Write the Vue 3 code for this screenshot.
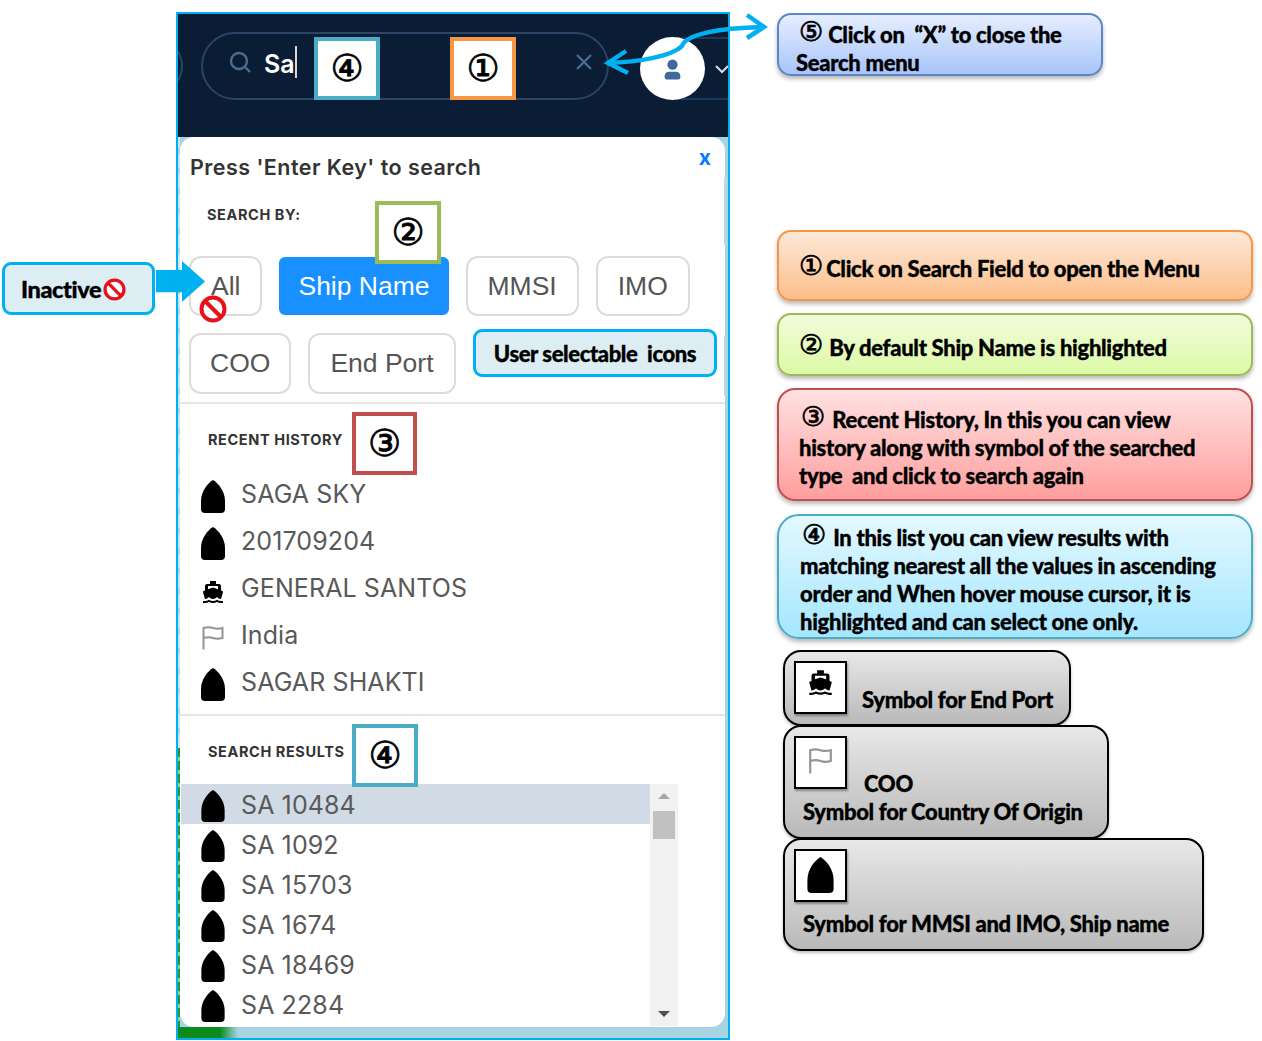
<script setup>
const chipsA = ['All', 'Ship Name', 'MMSI', 'IMO']
const chipsB = ['COO', 'End Port']

const history = [
  { icon: 'hull', label: 'SAGA SKY' },
  { icon: 'hull', label: '201709204' },
  { icon: 'ferry', label: 'GENERAL SANTOS' },
  { icon: 'flag', label: 'India' },
  { icon: 'hull', label: 'SAGAR SHAKTI' },
]

const results = ['SA 10484', 'SA 1092', 'SA 15703', 'SA 1674', 'SA 18469', 'SA 2284']
</script>

<template>
  <div class="page">
    <svg class="sprite" width="0" height="0">
      <defs>
        <symbol id="hull" viewBox="0 0 24 33">
          <path d="M12 0C17 3 24 11 24 21V29Q24 33 20 33H4Q0 33 0 29V21C0 11 7 3 12 0Z" fill="#000" />
        </symbol>
        <symbol id="ferry" viewBox="0 0 24 24">
          <path d="M20 21c-1.39 0-2.78-.47-4-1.32-2.44 1.71-5.56 1.71-8 0C6.78 20.53 5.39 21 4 21H2v2h2c1.38 0 2.74-.35 4-.99 2.52 1.29 5.48 1.29 8 0 1.26.65 2.62.99 4 .99h2v-2h-2zM3.95 19H4c1.6 0 3.02-.88 4-2 .98 1.12 2.4 2 4 2s3.02-.88 4-2c.98 1.12 2.4 2 4 2h.05l1.89-6.68c.08-.26.06-.54-.06-.78s-.34-.42-.6-.5L20 10.62V6c0-1.1-.9-2-2-2h-3V1H9v3H6c-1.1 0-2 .9-2 2v4.62l-1.29.42c-.26.08-.48.26-.6.5s-.15.52-.06.78L3.95 19zM7 6h10v3.2L12 7.6 7 9.2V6z" fill="#000" />
        </symbol>
        <symbol id="flag" viewBox="0 0 22 24">
          <path d="M1.5 23.5V2C5 1 8 1 11 2S17 3 20.5 2V12C17 13 14 13 11 12S5 11 1.5 12" fill="none" stroke="#959595" stroke-width="2" />
        </symbol>
        <symbol id="nope" viewBox="0 0 28 28">
          <circle cx="14" cy="14" r="11.5" fill="#fff" stroke="#e8111a" stroke-width="4" />
          <path d="M6 6L22 22" stroke="#e8111a" stroke-width="4" />
        </symbol>
      </defs>
    </svg>

    <div class="inactive">
      <span>Inactive</span>
      <svg class="nope-small"><use href="#nope" /></svg>
    </div>
    <div class="inactive-arrow"></div>

    <div class="panel">
      <header class="topbar">
        <div class="stub"></div>
        <div class="search">
          <svg class="search-icon" viewBox="0 0 24 24" width="24" height="24">
            <circle cx="11" cy="11" r="8" fill="none" stroke="#4b6d91" stroke-width="2.4" />
            <path d="M17 17L22 22" stroke="#4b6d91" stroke-width="2.4" />
          </svg>
          <span class="typed">Sa</span>
          <span class="caret"></span>
          <svg class="clear" viewBox="0 0 18 18" width="18" height="18">
            <path d="M2 2L16 16M16 2L2 16" stroke="#4a6b90" stroke-width="2.4" />
          </svg>
        </div>
        <div class="user">
          <div class="avatar">
            <svg viewBox="0 0 24 28" width="19" height="23">
              <circle cx="12" cy="9" r="6.5" fill="#3f6b9c" />
              <path d="M2 24Q2 18 8 18H16Q22 18 22 24Q22 28 18 28H6Q2 28 2 24Z" fill="#3f6b9c" />
            </svg>
          </div>
          <svg class="chevron" viewBox="0 0 14 10" width="14" height="10">
            <path d="M1 2L7 8L13 2" fill="none" stroke="#d5dde6" stroke-width="2" />
          </svg>
        </div>
      </header>

      <div class="card">
        <span class="card-close">x</span>
        <h1 class="card-title">Press 'Enter Key' to search</h1>

        <h2 class="label by">SEARCH BY:</h2>
        <div class="chips">
          <button v-for="c in chipsA" :key="c" class="chip" :class="{ on: c === 'Ship Name' }">{{ c }}</button>
        </div>
        <div class="chips second">
          <button v-for="c in chipsB" :key="c" class="chip">{{ c }}</button>
        </div>
        <hr class="rule first" />

        <h2 class="label">RECENT HISTORY</h2>
        <ul class="recent">
          <li v-for="h in history" :key="h.label" class="row">
            <svg class="row-icon" :class="h.icon"><use :href="'#' + h.icon" /></svg>
            <span class="row-text">{{ h.label }}</span>
          </li>
        </ul>
        <hr class="rule" />

        <h2 class="label">SEARCH RESULTS</h2>
        <div class="listbox">
          <ul class="result-list">
            <li v-for="(r, i) in results" :key="r" class="result" :class="{ hover: i === 0 }">
              <svg class="row-icon hull"><use href="#hull" /></svg>
              <span class="row-text">{{ r }}</span>
            </li>
          </ul>
          <div class="bar">
            <i class="tri up"></i>
            <i class="thumb"></i>
            <i class="tri down"></i>
          </div>
        </div>
      </div>

      <i class="card-thumb one"></i>
      <i class="card-thumb two"></i>

      <div class="mark mark-4a"><span>④</span></div>
      <div class="mark mark-1"><span>①</span></div>
      <div class="mark mark-2"><span>②</span></div>
      <div class="mark mark-3"><span>③</span></div>
      <div class="mark mark-4b"><span>④</span></div>
      <svg class="nope-big"><use href="#nope" /></svg>
      <div class="selectable">User selectable&nbsp; icons</div>
    </div>

    <svg class="arrows" viewBox="0 0 1262 1041" width="1262" height="1041">
      <path d="M607 63C640 62 672 56 682 46C686 34 720 28 762 27" fill="none" stroke="#00b0f0" stroke-width="4.5" />
      <path d="M626 51L608 63L628 73M747 15L764 27L747 38" fill="none" stroke="#00b0f0" stroke-width="4.5" />
    </svg>

    <aside class="notes">
      <div class="note blue">
        <p><span class="num">⑤</span> Click on&nbsp; “X” to close the</p>
        <p class="back">Search menu</p>
      </div>
      <div class="note orange">
        <p><span class="num">①</span> Click on Search Field to open the Menu</p>
      </div>
      <div class="note green">
        <p><span class="num">②</span> By default Ship Name is highlighted</p>
      </div>
      <div class="note red">
        <p><span class="num">③</span> Recent History, In this you can view</p>
        <p>history along with symbol of the searched</p>
        <p>type&nbsp; and click to search again</p>
      </div>
      <div class="note cyan">
        <p><span class="num">④</span> In this list you can view results with</p>
        <p>matching nearest all the values in ascending</p>
        <p>order and When hover mouse cursor, it is</p>
        <p>highlighted and can select one only.</p>
      </div>

      <div class="legend port">
        <div class="sym"><svg class="sym-ferry"><use href="#ferry" /></svg></div>
        <p class="port-text">Symbol for End Port</p>
      </div>
      <div class="legend coo">
        <div class="legend-top">
          <div class="sym"><svg class="sym-flag"><use href="#flag" /></svg></div>
          <p class="coo-text">COO</p>
        </div>
        <p class="under">Symbol for Country Of Origin</p>
      </div>
      <div class="legend ship">
        <div class="sym"><svg class="sym-hull"><use href="#hull" /></svg></div>
        <p class="under">Symbol for MMSI and IMO, Ship name</p>
      </div>
    </aside>
  </div>
</template>

<style scoped>
.page {
  position: relative;
  display: flex;
  align-items: flex-start;
  width: 1262px;
  height: 1041px;
  overflow: hidden;
  background: #fff;
  font-family: Inter, "Open Sans", sans-serif;
}

.sprite {
  position: absolute;
}

.inactive {
  position: absolute;
  left: 2px;
  top: 262px;
  width: 153px;
  height: 53px;
  box-sizing: border-box;
  display: flex;
  align-items: center;
  padding: 1px 0 0 16px;
  border: 3px solid #00b0f0;
  border-radius: 9px;
  background: #dcedf4;
  font: 900 23.5px Lato, sans-serif;
  letter-spacing: -0.4px;
  -webkit-text-stroke: 0.35px #000;
  color: #000;
}

.nope-small {
  width: 23px;
  height: 23px;
  margin-left: 2px;
}

.inactive-arrow {
  position: absolute;
  z-index: 2;
  left: 156px;
  top: 261px;
  width: 49px;
  height: 41px;
  background: #00b0f0;
  clip-path: polygon(0 22%, 53% 22%, 53% 0, 100% 50%, 53% 100%, 53% 76%, 0 76%);
}

.panel {
  position: relative;
  flex: none;
  width: 554px;
  height: 1028px;
  margin: 12px 0 0 176px;
  box-sizing: border-box;
  border: 2px solid #00b0f0;
  background:
    linear-gradient(90deg, #0c8a1e 70%, #a8d3e3) left bottom / 60px 11px no-repeat,
    repeating-linear-gradient(#1f9a2c 0 9px, #8ed39a 9px 13px) left bottom / 2px 290px no-repeat,
    repeating-linear-gradient(#cfe3ec 0 14px, #a9d8e8 14px 20px) left top / 2px 100% no-repeat,
    #a8d3e3;
}

.topbar {
  display: flex;
  align-items: flex-start;
  height: 123px;
  overflow: hidden;
  background: #0a1d35;
  padding-top: 18px;
  box-sizing: border-box;
}

.stub {
  flex: none;
  width: 40px;
  height: 48px;
  margin: 10px 0 0 -35px;
  border: 2px solid #2a4565;
  border-radius: 50%;
  box-sizing: border-box;
}

.search {
  flex: none;
  display: flex;
  align-items: center;
  width: 408px;
  height: 68px;
  margin-left: 18px;
  padding: 0 14px 8px 25px;
  box-sizing: border-box;
  border: 2px solid #2a4565;
  border-radius: 34px;
}

.search-icon {
  flex: none;
}

.typed {
  margin: 3px 0 0 12px;
  font-size: 25px;
  font-weight: 600;
  color: #fff;
}

.caret {
  width: 2px;
  height: 32px;
  background: #d9d9d9;
}

.clear {
  margin-left: auto;
}

.user {
  flex: none;
  display: flex;
  align-items: center;
  width: 130px;
  height: 63px;
  margin: 5px 0 0 31px;
  border: 2px solid #17395f;
  border-radius: 32px;
  border-left: 0;
  box-sizing: border-box;
}

.avatar {
  display: flex;
  align-items: center;
  justify-content: center;
  flex: none;
  width: 65px;
  height: 63px;
  border-radius: 50%;
  background: #fff;
}

.chevron {
  margin-left: 10px;
}

.card {
  position: relative;
  width: 545px;
  height: 890px;
  margin-left: 2px;
  background: #fff;
  border-radius: 14px;
}

.card-close {
  position: absolute;
  right: 14px;
  top: 8px;
  font-size: 21px;
  font-weight: 700;
  color: #0a7bff;
}

.card-title {
  margin: 0;
  padding: 16px 0 0 10px;
  font-size: 21.5px;
  line-height: 28px;
  font-weight: 600;
  letter-spacing: 0.45px;
  color: #333;
}

.label {
  margin: 26px 0 0 28px;
  font-size: 14.5px;
  line-height: 20px;
  font-weight: 700;
  letter-spacing: 0.6px;
  color: #333;
}

.label.by {
  margin: 24px 0 0 27px;
}

.chips {
  display: flex;
  align-items: center;
  gap: 17px;
  margin: 31px 0 0 9px;
}

.chips.second {
  margin-top: 17px;
}

.chip {
  height: 60px;
  padding: 0 20px;
  border: 2px solid #dcdcdc;
  border-radius: 12px;
  background: #fff;
  font: 26.5px "Liberation Sans", sans-serif;
  color: #555;
}

.second .chip {
  height: 61px;
}

.second .chip:first-child {
  padding: 0 19px;
}

.chip.on {
  height: 58px;
  padding: 0 17px;
  border-color: #1890ff;
  border-radius: 6px;
  background: #1890ff;
  color: #fff;
}

.rule {
  height: 2px;
  margin: 6px 0 0;
  border: 0;
  background: #e6e6e6;
}

.rule.first {
  margin-top: 8px;
}

.recent,
.result-list {
  list-style: none;
  margin: 0;
  padding: 0;
}

.recent {
  margin-top: 23px;
}

.row {
  display: flex;
  align-items: center;
  height: 47px;
  padding-left: 21px;
}

.row-icon {
  flex: none;
  width: 24px;
  height: 33px;
}

.row-icon.ferry {
  width: 24px;
  height: 24px;
  margin-top: 2px;
}

.row-icon.flag {
  width: 22px;
  height: 24px;
  margin: 1px 1px 0;
}

.row-text {
  margin: 0 0 5px 16px;
  font-size: 25px;
  letter-spacing: 0.1px;
  color: #595959;
}

.listbox {
  display: flex;
  width: 497px;
  height: 242px;
  margin: 22px 0 0 1px;
  overflow: hidden;
}

.result-list {
  flex: 1;
}

.result {
  display: flex;
  align-items: center;
  height: 40px;
  padding: 4px 0 0 20px;
  box-sizing: border-box;
}

.result.hover {
  background: #d0dbe6;
}

.result .row-icon {
  height: 32px;
}

.result .row-text {
  margin-bottom: 2px;
}

.bar {
  position: relative;
  flex: none;
  width: 28px;
  background: #f1f1f1;
}

.tri {
  position: absolute;
  left: 8px;
  border: 6px solid transparent;
}

.tri.up {
  top: 3px;
  border-bottom-color: #a8a8a8;
}

.tri.down {
  bottom: 3px;
  border-top-color: #505050;
}

.thumb {
  position: absolute;
  left: 3px;
  top: 27px;
  width: 22px;
  height: 28px;
  background: #c1c1c1;
}

.card-thumb {
  position: absolute;
  left: 546px;
  width: 3px;
  background: #bfd6e4;
}

.card-thumb.one {
  top: 163px;
  height: 68px;
}

.card-thumb.two {
  top: 322px;
  height: 60px;
}

.mark {
  position: absolute;
  display: flex;
  align-items: center;
  justify-content: center;
  width: 66px;
  height: 63px;
  box-sizing: border-box;
  border: 4px solid;
  background: #fff;
  font: 400 37px/1 "DejaVu Sans", sans-serif;
  -webkit-text-stroke: 0.8px #000;
  color: #000;
}

.mark-4a {
  left: 136px;
  top: 23px;
  border-color: #4bacc6;
}

.mark-1 {
  left: 272px;
  top: 23px;
  border-color: #f79646;
}

.mark-2 {
  left: 197px;
  top: 187px;
  border-color: #9bbb59;
}

.mark-3 {
  left: 174px;
  top: 398px;
  width: 65px;
  border-color: #c0504d;
}

.mark-4b {
  left: 174px;
  top: 710px;
  border-color: #4bacc6;
}

.nope-big {
  position: absolute;
  left: 21px;
  top: 281px;
  width: 28px;
  height: 28px;
}

.selectable {
  position: absolute;
  left: 295px;
  top: 315px;
  width: 244px;
  height: 48px;
  box-sizing: border-box;
  padding-top: 8px;
  text-align: center;
  border: 3px solid #00b0f0;
  border-radius: 9px;
  background: #dcedf4;
  font: 900 22px Lato, sans-serif;
  letter-spacing: -0.4px;
  -webkit-text-stroke: 0.35px #000;
  color: #000;
}

.arrows {
  position: absolute;
  z-index: 3;
  left: 0;
  top: 0;
  pointer-events: none;
}

.notes {
  flex: none;
  width: 476px;
  margin: 13px 0 0 47px;
  font: 900 22px/28px Lato, sans-serif;
  letter-spacing: -0.3px;
  -webkit-text-stroke: 0.35px #000;
  color: #000;
}

.notes p {
  margin: 0;
}

.note {
  box-sizing: border-box;
  padding-left: 20px;
  border: 2px solid;
  border-radius: 14px;
  box-shadow: 0 3px 4px rgb(0 0 0 / 0.28);
}

.num {
  position: relative;
  top: -2px;
  font: 400 27px/1 "DejaVu Sans", sans-serif;
  -webkit-text-stroke: 0.8px #000;
  letter-spacing: 0;
  color: #000;
}

.note.blue {
  width: 326px;
  height: 63px;
  padding-top: 5px;
  margin-bottom: 154px;
  border-color: #5b87c5;
  background: linear-gradient(#e6eeff, #a8c4fa);
}

.back {
  margin-left: -3px !important;
}

.note.orange {
  height: 71px;
  padding-top: 22px;
  margin-bottom: 12px;
  border-color: #f79646;
  background: linear-gradient(#fde9d9, #fcbe8a);
}

.note.orange .num {
  margin-right: -2px;
}

.note.green {
  height: 63px;
  padding-top: 18px;
  margin-bottom: 12px;
  border-color: #9bbb59;
  background: linear-gradient(#f2fddc, #dcf9a6);
}

.note.green .num {
  margin-right: 1px;
}

.note.red {
  height: 113px;
  padding-top: 15px;
  margin-bottom: 13px;
  border-color: #c0504d;
  border-radius: 18px;
  background: linear-gradient(#ffe1e1, #ff9e9e);
}

.note.red .num {
  margin: 0 2px;
}

.note.cyan {
  height: 125px;
  padding: 7px 0 0 21px;
  margin-bottom: 11px;
  border-color: #4bacc6;
  border-radius: 22px;
  background: linear-gradient(#e3f9ff, #a5e6ff);
}

.note.cyan .num {
  margin: 0 2px;
}

.legend {
  box-sizing: border-box;
  margin-left: 6px;
  padding: 9px 0 0 9px;
  border: 2px solid #000;
  border-radius: 18px;
  background: linear-gradient(#e8e8e8, #b9b9b9);
  box-shadow: 0 2px 3px rgb(0 0 0 / 0.25);
}

.legend.port {
  display: flex;
  width: 288px;
  height: 76px;
}

.legend.coo {
  width: 326px;
  height: 114px;
  margin-top: -1px;
}

.legend.ship {
  width: 421px;
  height: 113px;
  margin-top: -1px;
}

.legend-top {
  display: flex;
}

.sym {
  display: flex;
  align-items: center;
  justify-content: center;
  flex: none;
  width: 53px;
  height: 53px;
  box-sizing: border-box;
  border: 2px solid #000;
  background: #fff;
  box-shadow: 1px 2px 2px rgb(0 0 0 / 0.35);
}

.sym-ferry {
  width: 27px;
  height: 27px;
  margin-bottom: 10px;
}

.sym-flag {
  width: 25px;
  height: 26px;
  margin-bottom: 4px;
}

.sym-hull {
  width: 27px;
  height: 36px;
  margin-bottom: 2px;
}

.port-text {
  margin: 25px 0 0 15px !important;
}

.coo-text {
  margin: 34px 0 0 17px !important;
}

.under {
  margin: 0 0 0 9px !important;
}

.ship .under {
  margin-top: 8px !important;
}
</style>
